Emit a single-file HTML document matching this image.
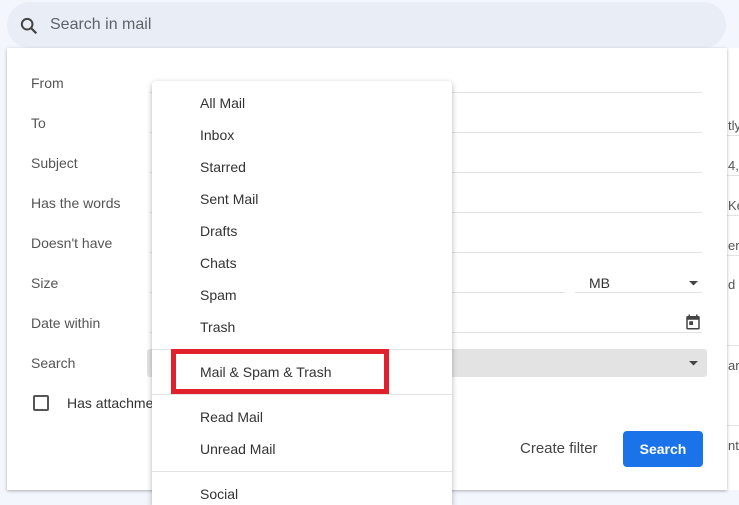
<!DOCTYPE html>
<html style="overflow:hidden;width:739px;height:505px"><head><style>
*{margin:0;padding:0;box-sizing:border-box}
body{width:739px;height:505px;overflow:hidden;background:#f3f6fc;font-family:"Liberation Sans",Arial,sans-serif;position:relative;color:#444}
.abs{position:absolute}
.search{left:7px;top:2px;width:719px;height:46px;background:#e9eef6;border-radius:24px}
.panel{left:7px;top:48px;width:720px;height:442px;background:#fff;box-shadow:0 1px 3px rgba(0,0,0,.3)}
.lbl{left:31px;font-size:14px;color:#555}
.line{height:1px;background:#e3e3e3}
.menu{left:152px;top:81px;width:300px;height:424px;background:#fff;box-shadow:0 2px 6px rgba(0,0,0,.3);border-radius:4px 4px 0 0}
.mi{left:200px;font-size:14px;color:#333}
.sep{left:152px;width:300px;height:1px;background:#e3e3e3}
.rt{left:728px;font-size:13px;color:#555}
</style></head><body>
<div class="abs" style="left:727px;top:48px;width:12px;height:442px;background:#fff"></div>
<div class="abs line" style="left:727px;top:135px;width:12px"></div>
<div class="abs line" style="left:727px;top:175px;width:12px"></div>
<div class="abs line" style="left:727px;top:215px;width:12px"></div>
<div class="abs line" style="left:727px;top:255px;width:12px"></div>
<div class="abs line" style="left:727px;top:345px;width:12px"></div>
<div class="abs line" style="left:727px;top:425px;width:12px"></div>
<div class="abs rt" style="top:118px">tly</div>
<div class="abs rt" style="top:158px">4,</div>
<div class="abs rt" style="top:198px">Ke</div>
<div class="abs rt" style="top:238px">er</div>
<div class="abs rt" style="top:277px">d</div>
<div class="abs rt" style="top:358px">ar</div>
<div class="abs rt" style="top:438px">nt'</div>
<div class="abs search"></div>
<svg class="abs" style="left:18px;top:15px" width="22" height="22" viewBox="0 0 24 24"><circle cx="10" cy="10" r="5.8" fill="none" stroke="#444" stroke-width="2.2"/><path d="M14.3 14.3L20 20" stroke="#444" stroke-width="2.4"/></svg>
<div class="abs" style="left:50px;top:16px;font-size:16px;color:#5f6368">Search in mail</div>
<div class="abs panel"></div>
<div class="abs lbl" style="top:75px">From</div>
<div class="abs lbl" style="top:115px">To</div>
<div class="abs lbl" style="top:155px">Subject</div>
<div class="abs lbl" style="top:195px">Has the words</div>
<div class="abs lbl" style="top:235px">Doesn't have</div>
<div class="abs lbl" style="top:275px">Size</div>
<div class="abs lbl" style="top:315px">Date within</div>
<div class="abs lbl" style="top:355px">Search</div>
<div class="abs line" style="left:150px;top:92px;width:552px"></div>
<div class="abs line" style="left:150px;top:132px;width:552px"></div>
<div class="abs line" style="left:150px;top:172px;width:552px"></div>
<div class="abs line" style="left:150px;top:212px;width:552px"></div>
<div class="abs line" style="left:150px;top:252px;width:552px"></div>
<div class="abs line" style="left:150px;top:292px;width:415px"></div>
<div class="abs line" style="left:575px;top:292px;width:127px"></div>
<div class="abs" style="left:589px;top:275px;font-size:14px;color:#333">MB</div>
<svg class="abs" style="left:689px;top:281px" width="9" height="5"><path d="M0 0h9L4.5 4.5z" fill="#444"/></svg>
<div class="abs line" style="left:150px;top:332px;width:552px"></div>
<svg class="abs" style="left:684px;top:313px" width="18" height="18" viewBox="0 0 24 24"><path d="M19 4h-1V2h-2v2H8V2H6v2H5a2 2 0 0 0-2 2v14a2 2 0 0 0 2 2h14a2 2 0 0 0 2-2V6a2 2 0 0 0-2-2zm0 16H5V9h14zM7 11h5v5H7z" fill="#444"/></svg>
<div class="abs" style="left:147px;top:349px;width:560px;height:28px;background:#e3e3e3;border-radius:3px"></div>
<svg class="abs" style="left:689px;top:361px" width="9" height="5"><path d="M0 0h9L4.5 4.5z" fill="#444"/></svg>
<div class="abs" style="left:33px;top:395px;width:16px;height:16px;border:2px solid #555;border-radius:2px"></div>
<div class="abs" style="left:67px;top:395px;font-size:14px;color:#333">Has attachment</div>
<div class="abs" style="left:520px;top:440px;font-size:15px;color:#444">Create filter</div>
<div class="abs" style="left:623px;top:431px;width:80px;height:36px;background:#1a73e8;border-radius:4px;color:#fff;font-size:14px;font-weight:bold;text-align:center;line-height:36px">Search</div>
<div class="abs menu"></div>
<div class="abs mi" style="top:95px">All Mail</div>
<div class="abs mi" style="top:127px">Inbox</div>
<div class="abs mi" style="top:159px">Starred</div>
<div class="abs mi" style="top:191px">Sent Mail</div>
<div class="abs mi" style="top:223px">Drafts</div>
<div class="abs mi" style="top:255px">Chats</div>
<div class="abs mi" style="top:287px">Spam</div>
<div class="abs mi" style="top:319px">Trash</div>
<div class="abs sep" style="top:349px"></div>
<div class="abs mi" style="top:364px">Mail &amp; Spam &amp; Trash</div>
<div class="abs" style="left:171px;top:349px;width:218px;height:45px;border:5px solid #e0202a"></div>
<div class="abs sep" style="top:394px"></div>
<div class="abs mi" style="top:409px">Read Mail</div>
<div class="abs mi" style="top:441px">Unread Mail</div>
<div class="abs sep" style="top:471px"></div>
<div class="abs mi" style="top:486px">Social</div>
</body></html>
